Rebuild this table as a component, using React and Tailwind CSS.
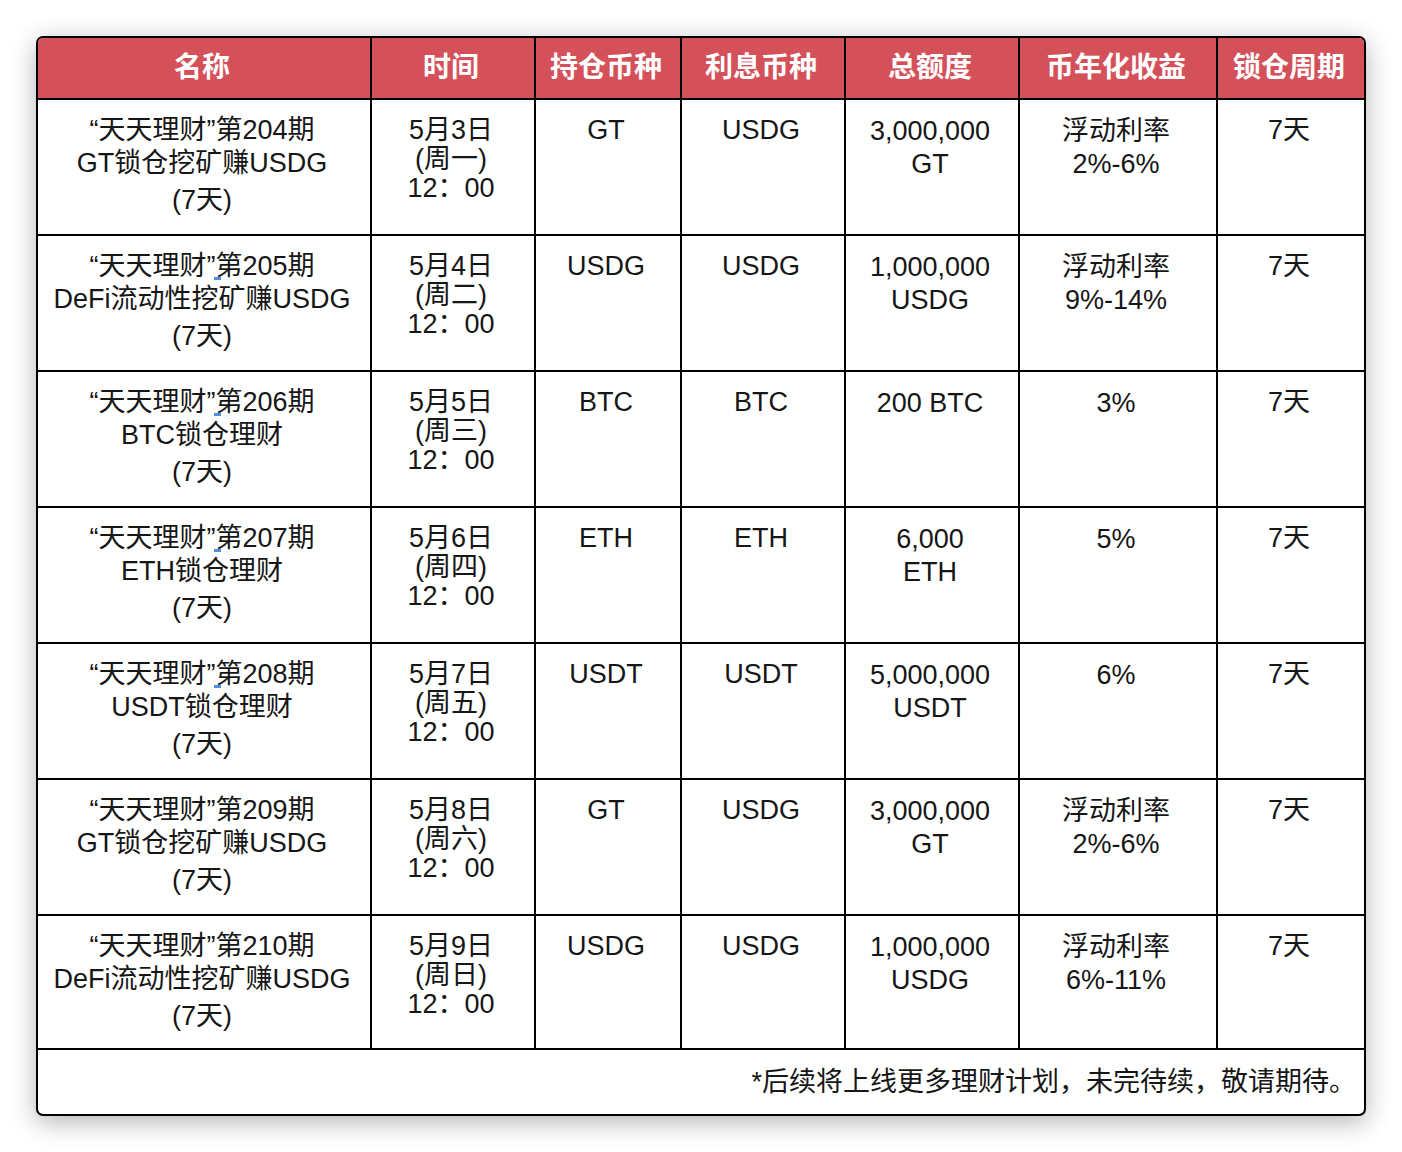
import React from "react";

const COLS = ["w-[334px]", "w-[164px]", "w-[146px]", "w-[164px]", "w-[174px]", "w-[198px]", "w-[146px]"];
const HEAD = ["名称", "时间", "持仓币种", "利息币种", "总额度", "币年化收益", "锁仓周期"];

const rows = [
  { n: "204", t2: "GT锁仓挖矿赚USDG", d: "5月3日", w: "(周一)", hold: "GT", int: "USDG", tot: ["3,000,000", "GT"], rate: ["浮动利率", "2%-6%"], mark: false },
  { n: "205", t2: "DeFi流动性挖矿赚USDG", d: "5月4日", w: "(周二)", hold: "USDG", int: "USDG", tot: ["1,000,000", "USDG"], rate: ["浮动利率", "9%-14%"], mark: true },
  { n: "206", t2: "BTC锁仓理财", d: "5月5日", w: "(周三)", hold: "BTC", int: "BTC", tot: ["200 BTC"], rate: ["3%"], mark: true },
  { n: "207", t2: "ETH锁仓理财", d: "5月6日", w: "(周四)", hold: "ETH", int: "ETH", tot: ["6,000", "ETH"], rate: ["5%"], mark: true },
  { n: "208", t2: "USDT锁仓理财", d: "5月7日", w: "(周五)", hold: "USDT", int: "USDT", tot: ["5,000,000", "USDT"], rate: ["6%"], mark: true },
  { n: "209", t2: "GT锁仓挖矿赚USDG", d: "5月8日", w: "(周六)", hold: "GT", int: "USDG", tot: ["3,000,000", "GT"], rate: ["浮动利率", "2%-6%"], mark: false },
  { n: "210", t2: "DeFi流动性挖矿赚USDG", d: "5月9日", w: "(周日)", hold: "USDG", int: "USDG", tot: ["1,000,000", "USDG"], rate: ["浮动利率", "6%-11%"], mark: false },
];

const font = { fontFamily: '"Liberation Sans", "Noto Sans CJK SC", sans-serif' };

function Cell({ i, children }) {
  return (
    <div className={`${COLS[i]} shrink-0 h-full flex flex-col items-center pt-[15px] pr-[4px] text-[27px] leading-[31px] text-[#161616] text-center ${i < 6 ? "border-r-2 border-black" : ""}`}>
      {children}
    </div>
  );
}

export default function App() {
  return (
    <div className="w-[1402px] h-[1152px] bg-white pt-[36px] pl-[36px]" style={font}>
      <div className="w-[1330px] border-2 border-black rounded-[7px] overflow-hidden bg-white shadow-[0_6px_26px_rgba(0,0,0,0.3)]">
        <div className="flex h-[62px] bg-[#d5515a] border-b-2 border-black">
          {HEAD.map((h, i) => (
            <div key={h} className={`${COLS[i]} shrink-0 h-full flex items-center justify-center pr-[4px] text-white font-bold text-[28px] ${i < 6 ? "border-r-2 border-black" : ""}`}>
              {h}
            </div>
          ))}
        </div>
        {rows.map((r, idx) => (
          <div key={r.n} className={`flex border-b-2 border-black ${idx === 6 ? "h-[134px]" : "h-[136px]"}`}>
            <Cell i={0}>
              <div>
                “天天理财
                <span className="relative">
                  ”
                  {r.mark && <span className="absolute right-[-6px] bottom-[1px] w-[7px] h-[3px] bg-[#4a8fe0]" />}
                </span>
                第{r.n}期
              </div>
              <div className="mt-[2px]">{r.t2}</div>
              <div className="mt-[6px]">(7天)</div>
            </Cell>
            <Cell i={1}>
              <div className="leading-[30px]">{r.d}</div>
              <div className="leading-[30px] -mt-[1px]">{r.w}</div>
              <div className="leading-[30px] -mt-[1px]">12：00</div>
            </Cell>
            <Cell i={2}>
              <div>{r.hold}</div>
            </Cell>
            <Cell i={3}>
              <div>{r.int}</div>
            </Cell>
            <Cell i={4}>
              {r.tot.map((t) => (
                <div key={t} className="leading-[34px] -mt-[1px]">{t}</div>
              ))}
            </Cell>
            <Cell i={5}>
              {r.rate.map((t) => (
                <div key={t} className="leading-[34px] -mt-[1px]">{t}</div>
              ))}
            </Cell>
            <Cell i={6}>
              <div>7天</div>
            </Cell>
          </div>
        ))}
        <div className="h-[64px] flex items-center justify-end pr-[8px] text-[27px] text-[#161616]">
          *后续将上线更多理财计划，未完待续，敬请期待。
        </div>
      </div>
    </div>
  );
}
